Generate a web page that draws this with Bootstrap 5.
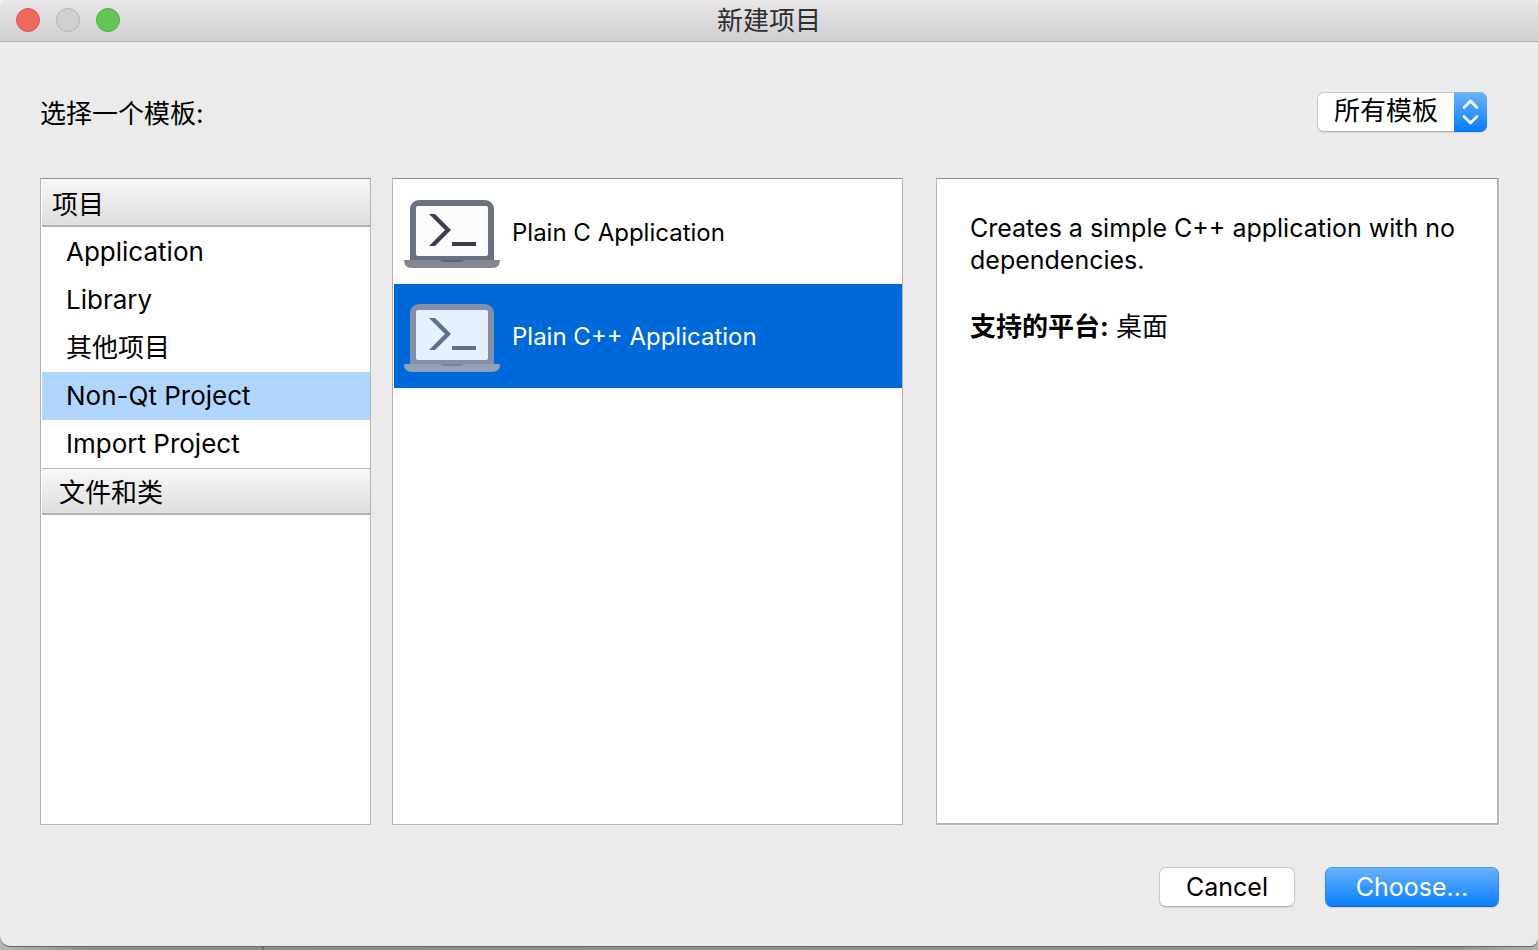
<!DOCTYPE html>
<html lang="zh-CN">
<head>
<meta charset="utf-8">
<meta name="viewport" content="width=device-width, initial-scale=1">
<title>新建项目</title>
<link href="https://cdn.jsdelivr.net/npm/bootstrap@5.3.0/dist/css/bootstrap.min.css" rel="stylesheet">
<style>
  body {
    font-family: Inter, "Noto Sans CJK SC", sans-serif;
    font-size: 25px;
    line-height: 32px;
    color: #000;
    background: linear-gradient(90deg, #b8b8b8 0, #8c8c8c 90px, #8c8c8c 262px, #6c6c6c 262px, #6c6c6c 264px, #8c8c8c 264px, #949494 95%, #b0b0b0 100%) bottom / 100% 20px no-repeat #f4f4f4;
    padding-bottom: 4px;
  }
  .zh { font-size: 26px; }
  .dialog-window { background: #ebebeb; border-radius: 8px 4px 8px 10px; box-shadow: 0 1px 0 #686868; overflow: hidden; }
  .title-bar {
    height: 42px;
    background: linear-gradient(#e9e7ea, #d1ced2);
    border-bottom: 1px solid #b1aeb2;
    color: #2e2e2e;
  }
  .lights { left: 16px; top: 8px; gap: 16px; }
  .light { width: 24px; height: 24px; border: 1px solid; border-radius: 50%; padding: 0; }
  .light-close { background: #ec6a5e; border-color: #d9574c; }
  .light-min { background: #d0d0d0; border-color: #b4b4b4; }
  .light-zoom { background: #62c654; border-color: #51ab43; }

  .dialog-body { padding: 50px 39px 39px 40px; }
  .filter-row { padding-right: 12px; margin-bottom: 46px; }
  .filter-row label { padding-top: 4px; }
  .filter-box { width: 170px; height: 40px; }
  .filter-box select {
    appearance: none;
    background: #fff;
    border: 1px solid #c8c8c8;
    border-bottom-color: #b4b4b4;
    border-radius: 7px;
    padding: 0 32px 2px 16px;
    line-height: 36px;
    color: #000;
    box-shadow: 0 1px 1px #00000018;
  }
  .stepper {
    width: 33px;
    border-radius: 0 7px 7px 0;
    background: linear-gradient(#6cb3fa, #077dff);
    border: 1px solid #0a6cf0;
    border-width: 0 0 1px;
    pointer-events: none;
  }

  .panels { display: grid; grid-template-columns: minmax(0, 331fr) minmax(0, 511fr) minmax(0, 575fr); gap: 21px; }
  .panel { background: #fff; border: 1px solid #b4b4b4; border-top-color: #8e8e8e; }
  .panel-categories { padding-left: 1px; }
  .panel-templates { padding: 1px 0 0 1px; }
  .panel-details { margin-left: 12px; padding: 33px 32px 33px 33px; border-right-width: 2px; border-bottom-width: 2px; box-shadow: 1px 1px 0 #f8f8f8; }
  .platforms { margin: 32px 0 0; line-height: 38px; }

  .group-title {
    height: 48px;
    padding: 3px 10px 0;
    line-height: 46px;
    background: linear-gradient(#f8f8f8, #dedede);
    border-bottom: 2px solid #b2b2b2;
    margin-bottom: 1px;
  }
  .group-title-next { height: 47px; padding: 1px 17px 0; border-top: 1px solid #b4b4b4; }
  .category { height: 48px; padding: 0 24px; font-size: 26px; line-height: 48px; color: #000; }
  .category.active { background: #b0d6ff; color: #000; }
  .template { height: 104px; padding: 4px 10px 0; gap: 12px; font-size: 24px; color: #000; }
  .template span { padding-bottom: 2px; }
  .template.active { background: #0069da; color: #fff; }
  .template svg { --frame: #6c7083; --screen: #fcfcfc; --base: #858894; --notch: #5e6373; --prompt: #3a3d54; }
  .template.active svg { --frame: #8390a9; --screen: #e4f0fd; --base: #93a1b9; --notch: #7485a1; --prompt: #5d6f8c; }

  .actions { gap: 30px; padding-top: 42px; }
  .push {
    height: 40px;
    padding: 0;
    border-radius: 7px;
    font-size: 25px;
    line-height: 38px;
    color: #000;
    background: #fff;
    border: 1px solid #c8c8c8;
    border-bottom-color: #b0b0b0;
    box-shadow: 0 1px 1px #00000018;
  }
  .push-cancel { width: 136px; }
  .push-choose { width: 174px; color: #fff; background: linear-gradient(#6cb3fa, #077dff) border-box; border-color: #4a9ff5 #2a86f5 #0a62e8; }
</style>
</head>
<body class="min-vh-100 d-flex flex-column">
<main class="dialog-window flex-grow-1 d-flex flex-column">
  <header class="title-bar position-relative d-flex align-items-center justify-content-center">
    <div class="lights position-absolute d-flex">
      <button type="button" class="light light-close" aria-label="关闭"></button>
      <button type="button" class="light light-min" aria-label="最小化" disabled></button>
      <button type="button" class="light light-zoom" aria-label="缩放"></button>
    </div>
    <h1 class="zh fw-normal lh-1 m-0">新建项目</h1>
  </header>

  <div class="dialog-body flex-grow-1 d-flex flex-column">
    <div class="filter-row d-flex justify-content-between align-items-center">
      <label class="zh" for="filter">选择一个模板:</label>
      <div class="filter-box position-relative">
        <select id="filter" class="zh w-100 h-100"><option>所有模板</option></select>
        <span class="stepper position-absolute top-0 end-0 h-100 d-flex align-items-center justify-content-center">
          <svg width="17" height="26" viewBox="0 0 17 26" fill="none" stroke="#fff" stroke-width="2.6" stroke-linecap="round" stroke-linejoin="round" aria-hidden="true"><path d="M2 8.500 8.500 2 15 8.500M2 17.500 8.500 24 15 17.500"/></svg>
        </span>
      </div>
    </div>

    <div class="panels flex-grow-1">
      <nav class="panel panel-categories">
        <h2 class="group-title zh fw-normal">项目</h2>
        <div class="list-group list-group-flush">
          <button type="button" class="category list-group-item-action border-0 bg-transparent">Application</button>
          <button type="button" class="category list-group-item-action border-0 bg-transparent">Library</button>
          <button type="button" class="category list-group-item-action border-0 bg-transparent">其他项目</button>
          <button type="button" class="category list-group-item-action border-0 active" aria-current="true">Non-Qt Project</button>
          <button type="button" class="category list-group-item-action border-0 bg-transparent">Import Project</button>
        </div>
        <h2 class="group-title group-title-next zh fw-normal">文件和类</h2>
      </nav>

      <div class="panel panel-templates">
        <button type="button" class="template list-group-item-action border-0 bg-transparent d-flex align-items-center">
          <svg width="96" height="68" viewBox="0 0 96 68" aria-hidden="true">
            <path fill="var(--frame)" d="M6 60V9a9 9 0 0 1 9-9h66a9 9 0 0 1 9 9v51z"/>
            <rect fill="var(--screen)" x="12" y="6" width="72" height="50" rx="2"/>
            <path fill="var(--base)" d="M0 60h96q0 8-8 8H8q-8 0-8-8z"/>
            <path fill="var(--notch)" d="M36 60h24q-1 2-4 2H40q-3 0-4-2z"/>
            <path fill="var(--prompt)" d="M25 14h6l16 16-16 16h-6l16-16zM48 42h24v4H48z"/>
          </svg>
          <span>Plain C Application</span>
        </button>
        <button type="button" class="template list-group-item-action border-0 active d-flex align-items-center" aria-current="true">
          <svg width="96" height="68" viewBox="0 0 96 68" aria-hidden="true">
            <path fill="var(--frame)" d="M6 60V9a9 9 0 0 1 9-9h66a9 9 0 0 1 9 9v51z"/>
            <rect fill="var(--screen)" x="12" y="6" width="72" height="50" rx="2"/>
            <path fill="var(--base)" d="M0 60h96q0 8-8 8H8q-8 0-8-8z"/>
            <path fill="var(--notch)" d="M36 60h24q-1 2-4 2H40q-3 0-4-2z"/>
            <path fill="var(--prompt)" d="M25 14h6l16 16-16 16h-6l16-16zM48 42h24v4H48z"/>
          </svg>
          <span>Plain C++ Application</span>
        </button>
      </div>

      <section class="panel panel-details">
        <p class="mb-0">Creates a simple C++ application with no dependencies.</p>
        <p class="platforms zh"><strong>支持的平台:</strong> 桌面</p>
      </section>
    </div>

    <footer class="actions d-flex justify-content-end">
      <button type="button" class="push push-cancel">Cancel</button>
      <button type="button" class="push push-choose">Choose...</button>
    </footer>
  </div>
</main>
<script src="https://cdn.jsdelivr.net/npm/bootstrap@5.3.0/dist/js/bootstrap.bundle.min.js"></script>
</body>
</html>
